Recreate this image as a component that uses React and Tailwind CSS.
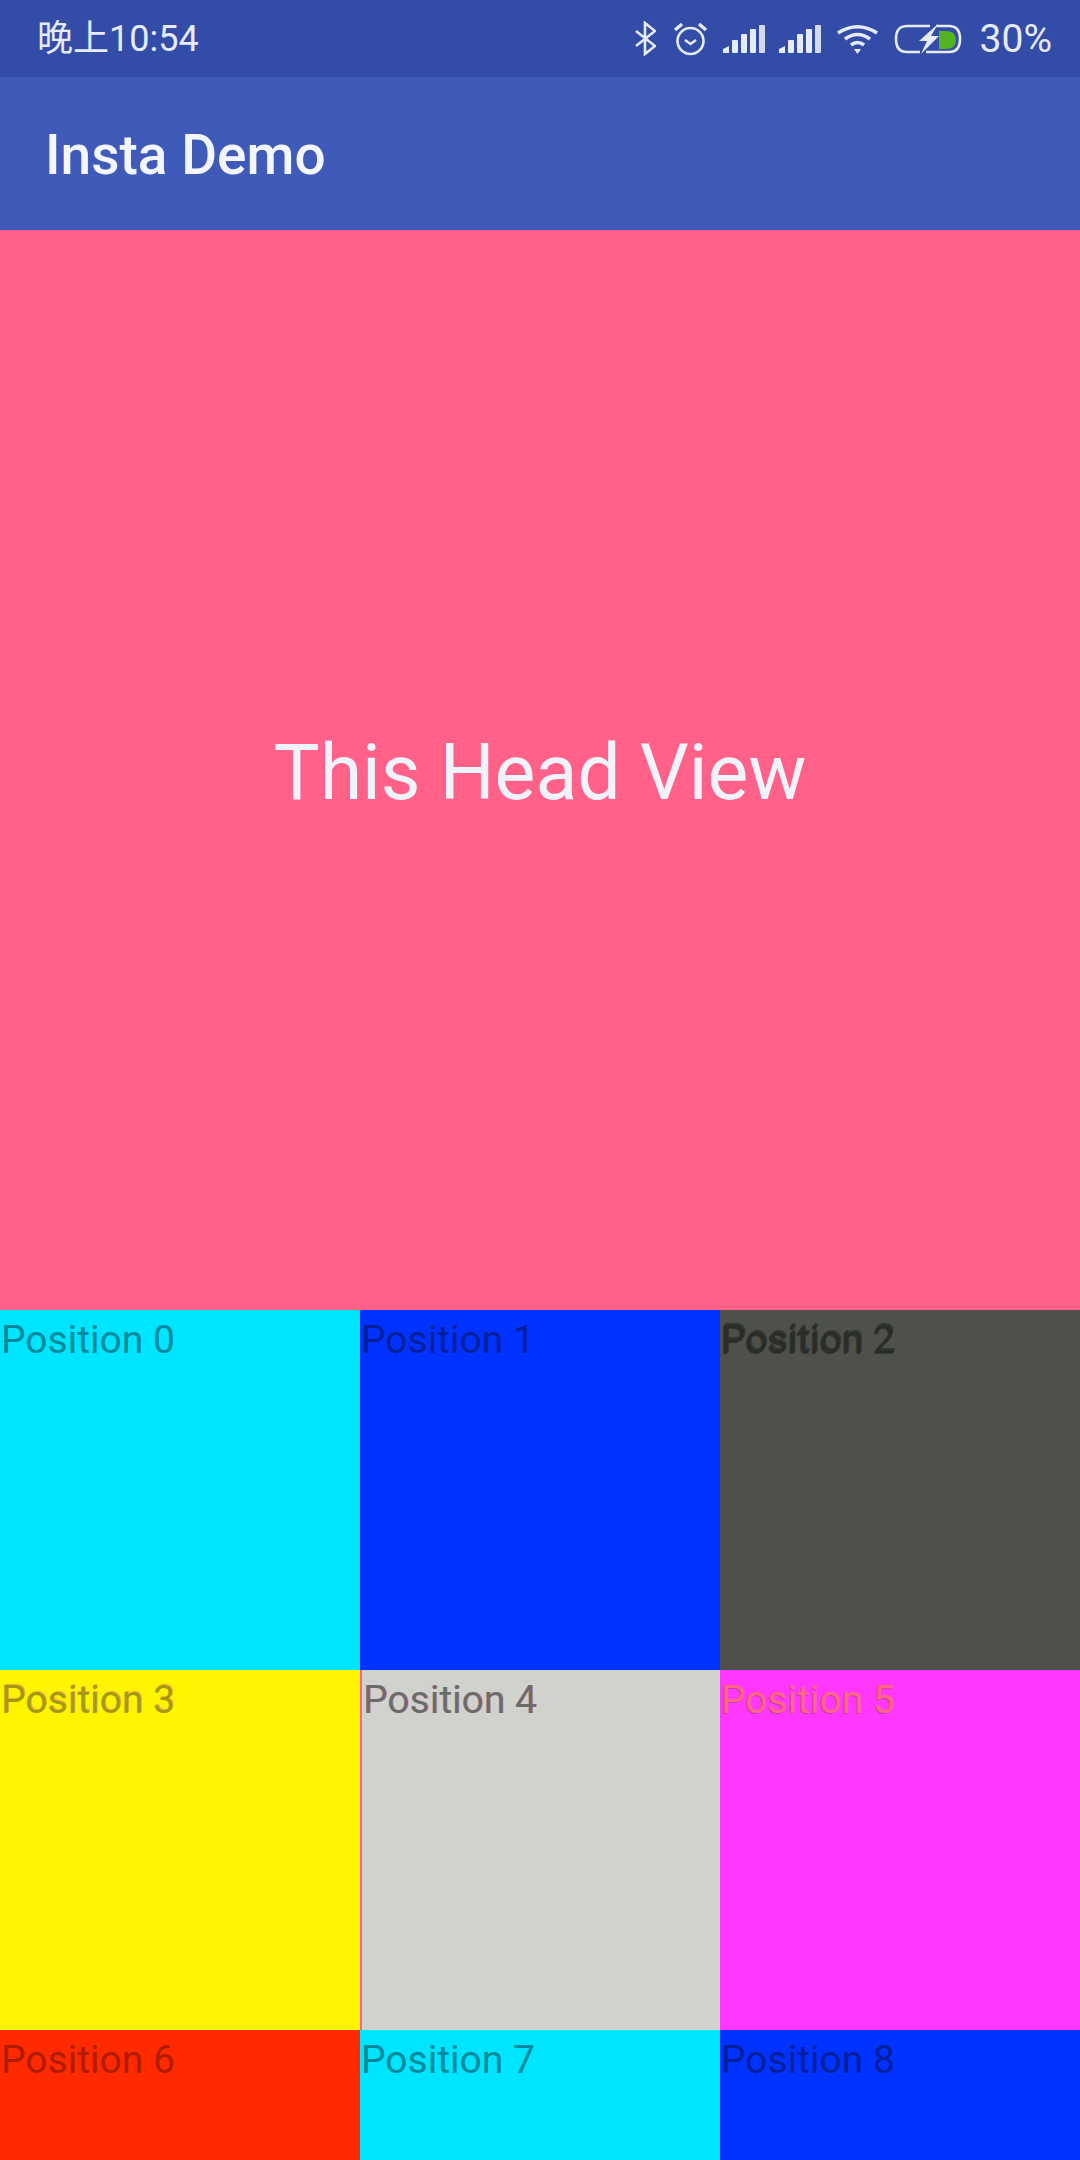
const roboto = "font-['Roboto',sans-serif]";

function Cell({ bg, text, label, extra }) {
  return (
    <div className={`h-[360px] overflow-hidden ${bg}`}>
      <p className={`pl-[1px] text-[39px] leading-[60px] ${roboto} ${text} ${extra || ""}`}>{label}</p>
    </div>
  );
}

function Signal({ className }) {
  return (
    <svg width="42" height="28" viewBox="0 0 42 28" fill="currentColor" className={className}>
      <path d="M0 28 V24 L6 21 V28 Z" />
      <rect x="9" y="15" width="6" height="13" rx="1" />
      <rect x="18" y="9" width="6" height="19" rx="1" />
      <rect x="27" y="4" width="6" height="24" rx="1" />
      <rect x="36" y="0" width="6" height="28" rx="1" fill="#d5dae8" />
    </svg>
  );
}

function StatusIcons() {
  return (
    <div className="flex items-center text-[#e6ebfa]">
      <svg width="21" height="35" viewBox="0 0 21 35" fill="none" stroke="currentColor" strokeWidth="2.6">
        <path d="M1 10 L20 25 L10 33 V2 L20 10 L1 25" />
      </svg>
      <svg width="35" height="34" viewBox="0 0 35 34" fill="none" stroke="currentColor" strokeWidth="2.6" className="ml-[17px]">
        <circle cx="17.5" cy="19" r="13" />
        <path d="M12 18 L17.5 22 L23 18" />
        <path d="M2 8 L9 2 M26 2 L33 8" strokeWidth="3.4" />
      </svg>
      <Signal className="ml-[15px]" />
      <Signal className="ml-[14px]" />
      <svg width="43" height="30" viewBox="0 0 43 30" fill="none" stroke="currentColor" strokeWidth="3.6" className="ml-[15px]">
        <path d="M2 9 Q21.5 -3.500 41 9" />
        <path d="M9 15 Q21.500 6 34 15" />
        <path d="M15 21 Q21.500 16 28 21" />
        <path d="M18 25 H25 L21.500 30 Z" fill="currentColor" stroke="none" />
      </svg>
      <svg width="68" height="30" viewBox="0 0 68 30" fill="none" className="ml-[15px]">
        <path d="M36 2 H13 Q2 2 2 15 Q2 28 13 28 H26" stroke="currentColor" strokeWidth="2.6" />
        <path d="M42 2 H55 Q66 2 66 15 Q66 28 55 28 H32" stroke="currentColor" strokeWidth="2.6" />
        <path d="M44 0 L25 17 H33 L27 30 L45 12 H37 Z" fill="currentColor" />
        <path d="M45 7 H52 Q62 7 62 16 Q62 25 52 25 H45 Z" fill="#52b41e" />
      </svg>
      <span className={`ml-[18px] text-[39px] leading-[40px] ${roboto}`}>30%</span>
    </div>
  );
}

export default function App() {
  return (
    <div className="w-[1080px] h-[2160px] overflow-hidden bg-black">
      <div className="h-[77px] bg-[#334ca8] flex items-center justify-between pl-[37px] pr-[28px]">
        <span className="text-[36px] leading-[40px] text-[#e6ebfa] font-['Roboto','Noto_Sans_CJK_SC',sans-serif]">晚上10:54</span>
        <StatusIcons />
      </div>
      <div className="h-[153px] bg-[#3f5ab8] flex items-center pl-[45px] pt-[4px]">
        <span className={`text-[55px] font-medium text-[#f4f6fd] ${roboto}`}>Insta Demo</span>
      </div>
      <div className="h-[1080px] bg-[#ff6188] flex items-center justify-center pt-[8px]">
        <span className={`text-[77px] text-[#f0f3fa] ${roboto}`}>This Head View</span>
      </div>
      <div className="grid grid-cols-3">
        <Cell bg="bg-[#00e5ff]" text="text-[#00899a]" label="Position 0" />
        <Cell bg="bg-[#0033ff]" text="text-[#041f9a]" label="Position 1" />
        <Cell bg="bg-[#4e504c]" text="text-[#2a2c28]" label="Position 2" extra="[text-shadow:1px_-2px_0_#33352f,-1px_1px_0_#33352f]" />
        <Cell bg="bg-[#fff500]" text="text-[#a39a10]" label="Position 3" extra="[text-shadow:1px_-1px_0_#ff618880]" />
        <Cell bg="bg-[#d0d2ce] border-l-2 border-[#ff6188]" text="text-[#6a6c6c]" label="Position 4" extra="[text-shadow:1px_0_0_#ff618880]" />
        <Cell bg="bg-[#ff37ff]" text="text-[#ff6680]" label="Position 5" extra="[text-shadow:-1px_1px_0_#c040b0]" />
        <Cell bg="bg-[#ff2a00]" text="text-[#b01c00]" label="Position 6" />
        <Cell bg="bg-[#00e5ff]" text="text-[#00899a]" label="Position 7" />
        <Cell bg="bg-[#0033ff]" text="text-[#041f9a]" label="Position 8" />
      </div>
    </div>
  );
}
